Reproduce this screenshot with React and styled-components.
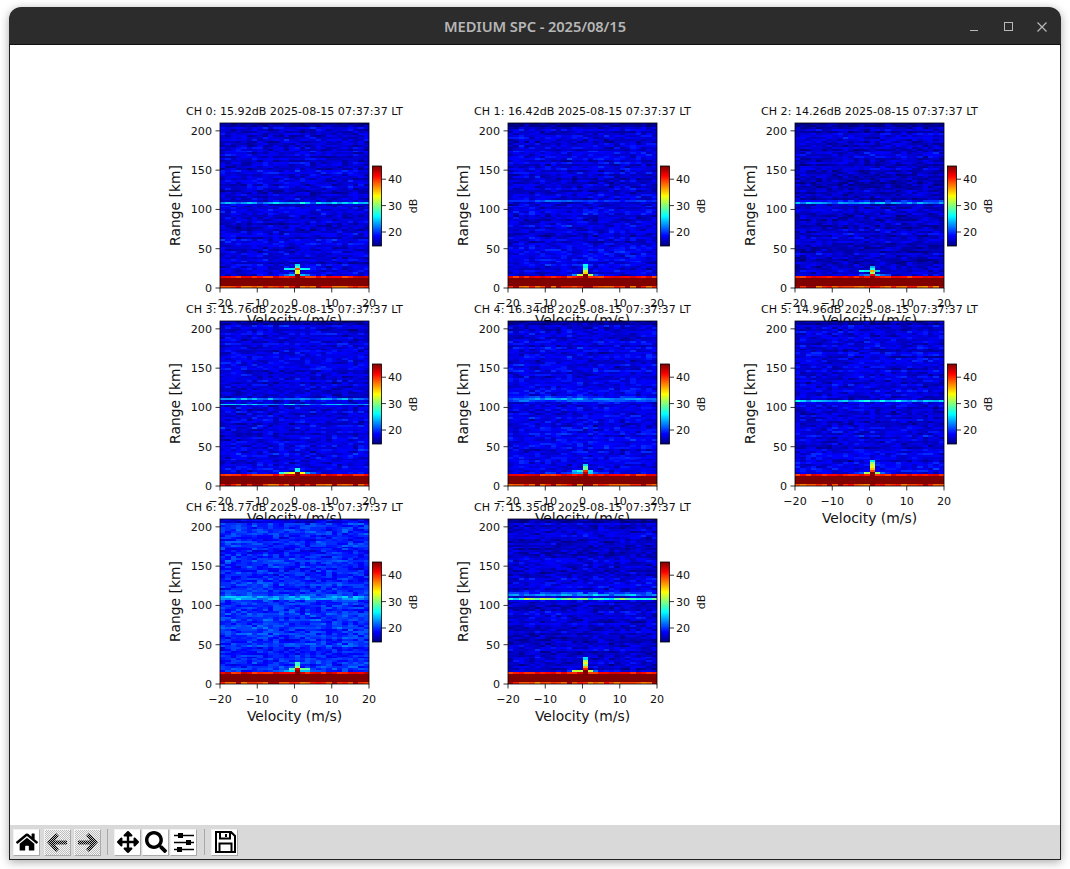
import { useId, useMemo } from 'react';
import styled, { createGlobalStyle } from 'styled-components';
import { FaHome, FaArrowsAlt, FaSearch } from 'react-icons/fa';

const GlobalStyle = createGlobalStyle`
  html, body { margin: 0; padding: 0; background: #fff; }
  body { width: 1070px; height: 869px; overflow: hidden; }
`;

const Window = styled.div`
  width: 1052px;
  height: 853px;
  margin: 7px 9px 9px;
  display: flex;
  flex-direction: column;
  box-sizing: border-box;
  background: #fff;
  border-radius: 12px 12px 0 0;
  box-shadow: 0 2px 10px rgba(0, 0, 0, 0.35);
  overflow: hidden;
`;

const TitleBar = styled.header`
  height: 38px;
  flex: none;
  position: relative;
  display: flex;
  align-items: center;
  justify-content: center;
  background: #2c2c2c;
  border-bottom: 1px solid #111;
  box-sizing: border-box;
`;

const Title = styled.h1`
  margin: 0;
  font: 600 14.7px "Noto Sans", sans-serif;
  letter-spacing: -0.1px;
  color: #b6b6b6;
`;

const WindowControls = styled.div`
  position: absolute;
  right: 2px;
  top: 0;
  height: 38px;
  display: flex;
`;

const WindowButton = styled.svg`
  width: 34px;
  height: 38px;
  fill: none;
  stroke: #b8b8b8;
  stroke-width: 1;
`;

const Body = styled.div`
  flex: 1;
  display: flex;
  flex-direction: column;
  min-height: 0;
  border-left: 1px solid #222;
  border-right: 1px solid #222;
  border-bottom: 1px solid #222;
`;

const Figure = styled.main`
  flex: 1;
  display: grid;
  grid-template-columns: 288px 287px 288px;
  grid-auto-rows: 198px;
  align-content: start;
  padding: 54px 0 0 150px;
`;

const ChartSvg = styled.svg`
  display: block;
  width: 288px;
  height: 198px;
  overflow: visible;
  font-family: "DejaVu Sans", sans-serif;
  fill: #000;
`;

const TickText = styled.text`
  font-size: 11.1px;
  fill: #111;
`;

const AxisLabel = styled.text`
  font-size: 13.9px;
  text-anchor: middle;
  fill: #111;
`;

const ChartTitle = styled.text`
  font-size: 11.1px;
  fill: #111;
`;

const CellPath = styled.path`
  shape-rendering: crispEdges;
`;

const Toolbar = styled.footer`
  height: 34px;
  flex: none;
  display: flex;
  align-items: center;
  padding-left: 3px;
  background: #d9d9d9;
`;

const ToolButton = styled.button`
  width: 27px;
  height: 27px;
  margin-right: ${(p) => p.$gap ?? 1}px;
  padding: 0;
  display: flex;
  align-items: center;
  justify-content: center;
  box-sizing: border-box;
  border: 1px solid;
  border-color: #f2f2f2 #aaa #aaa #f2f2f2;
  background: ${(p) => (p.$disabled
    ? 'repeating-conic-gradient(#bdbdbd 0 25%, #f4f4f4 0 50%) 0 0 / 2px 2px'
    : '#fff')};
  color: #000;
  svg { font-size: ${(p) => p.$size ?? 22}px; }
`;

const Separator = styled.span`
  width: 1px;
  height: 26px;
  margin: 0 6px;
  background: #a9a9a9;
`;

const DitherIcon = styled.svg`
  width: 25px;
  height: 25px;
  flex: none;
`;

const DrawnIcon = styled.svg`
  width: 24px;
  height: 24px;
  flex: none;
`;

const PLOT = { x: 60, y: 24, w: 149, h: 165 };
const COLS = 28;
const ROWS = 84;
const RANGE_TOP = 210;
const DB_MIN = 14.7;
const DB_MAX = 45;

const CHANNELS = [
  { id: 0, snr: '15.92', base: 17.4, lines: [[108, 6, 1.3]], peak: 30, spur: [23, 3, 5], seed: 11 },
  { id: 1, snr: '16.42', base: 17.5, lines: [[111, 3, 1.3]], peak: 30, spur: [16, 2, 3], seed: 23 },
  { id: 2, snr: '14.26', base: 16.9, lines: [[108, 5, 1.3], [112, 2, 1.3]], peak: 27, spur: [21, 3, 3], seed: 37 },
  { id: 3, snr: '15.76', base: 17.6, lines: [[104, 5.5, 1.3], [111, 5, 1.3]], peak: 23, spur: [16, 4, 3], seed: 41 },
  { id: 4, snr: '16.34', base: 17.8, lines: [[111, 5, 1.3], [114, 2, 1.3], [108, 2, 1.3]], peak: 28, spur: [18, 3, 3], seed: 53 },
  { id: 5, snr: '14.96', base: 17.5, lines: [[109, 6, 1.3]], peak: 33, spur: [16, 2, 3], seed: 67 },
  { id: 6, snr: '18.77', base: 19.6, lines: [[110, 3.5, 3]], peak: 28, spur: [18, 1, 5], seed: 71 },
  { id: 7, snr: '15.35', base: 17.2, lines: [[108, 11, 1.3], [113, 5, 1.3], [116, 2.5, 1.3]], peak: 35, spur: [17, 3, 3], seed: 83 },
];

const random = (seed) => () => {
  seed = (seed + 0x6d2b79f5) | 0;
  let t = Math.imul(seed ^ (seed >>> 15), 1 | seed);
  t = (t + Math.imul(t ^ (t >>> 7), 61 | t)) ^ t;
  return ((t ^ (t >>> 14)) >>> 0) / 4294967296;
};

const clamp = (v) => Math.max(0, Math.min(1, v));

function jet(v) {
  const part = (c) => Math.round(255 * clamp(1.5 - Math.abs(4 * v - c)));
  return `rgb(${part(3)},${part(2)},${part(1)})`;
}

// spectrum cell in dB, for one range row and one velocity bin
function cellValue(ch, km, vel, rowShift, rnd) {
  const near = Math.abs(vel - 0.6);
  if (km < 2.5) return rnd() < 0.85 ? 37 + rnd() * 4 : 44;
  if (km < 13) return 45.5;
  if (km < 15.2) return near < 1 ? 45.5 : 39 + rnd() * 4;

  let db = ch.base + rowShift + (rnd() + rnd() - 1) * 2.2;
  if (km > 205) db -= 2;
  for (const [center, strength, width] of ch.lines) {
    const d = Math.abs(km - center) / width;
    if (d < 1) db += strength * (0.7 + rnd() * 0.6);
  }
  if (near < 1.1 && km < ch.peak) db += 6 + (ch.peak - km) * (0.8 + rnd() * 0.4);
  const [spurKm, spurLeft, spurRight] = ch.spur;
  if (Math.abs(km - spurKm) < 1.3 && vel > -spurLeft && vel < spurRight) db += 8;
  if (km < 17 && near < 6) db += 8 * (1 - near / 6);
  return db;
}

function buildSpectrum(ch) {
  const rnd = random(ch.seed);
  const buckets = new Map();
  const cw = PLOT.w / COLS;
  const rh = PLOT.h / ROWS;
  for (let r = 0; r < ROWS; r++) {
    const km = ((ROWS - r - 0.5) / ROWS) * RANGE_TOP;
    const rowShift = (rnd() - 0.5) * 1.6;
    for (let c = 0; c < COLS; c++) {
      const vel = ((c + 0.5) / COLS) * 40 - 20;
      const db = cellValue(ch, km, vel, rowShift, rnd);
      const level = Math.round(clamp((db - DB_MIN) / (DB_MAX - DB_MIN)) * 48) / 48;
      const color = jet(level);
      const x = (c * cw).toFixed(2);
      const y = (r * rh).toFixed(2);
      const cell = `M${x} ${y}h${cw.toFixed(2)}v${rh.toFixed(2)}h-${cw.toFixed(2)}z`;
      buckets.set(color, (buckets.get(color) ?? '') + cell);
    }
  }
  return [...buckets.entries()];
}

const minus = (n) => (n < 0 ? `\u2212${-n}` : `${n}`);

function Colorbar({ gradientId }) {
  const x = PLOT.x + 152.5;
  const y = PLOT.y + 43;
  const h = 80;
  const yOf = (db) => y + h - ((db - DB_MIN) / (DB_MAX - DB_MIN)) * h;
  return (
    <g>
      <rect x={x} y={y} width={9} height={h} fill={`url(#${gradientId})`} stroke="#000" strokeWidth="0.8" />
      {[20, 30, 40].map((db) => (
        <g key={db}>
          <line x1={x + 9} x2={x + 13.5} y1={yOf(db)} y2={yOf(db)} stroke="#000" strokeWidth="0.8" />
          <TickText x={x + 15.5} y={yOf(db) + 4}>{db}</TickText>
        </g>
      ))}
      <TickText transform={`translate(${x + 44} ${y + 40}) rotate(-90)`} textAnchor="middle">dB</TickText>
    </g>
  );
}

function SpectrumChart({ ch }) {
  const gradientId = useId();
  const cells = useMemo(() => buildSpectrum(ch), [ch]);
  const { x, y, w, h } = PLOT;
  const stops = Array.from({ length: 17 }, (_, i) => i / 16);
  return (
    <ChartSvg viewBox="0 0 288 198">
      <defs>
        <linearGradient id={gradientId} x1="0" y1="1" x2="0" y2="0">
          {stops.map((s) => <stop key={s} offset={s} stopColor={jet(s)} />)}
        </linearGradient>
      </defs>
      <ChartTitle x={x - 34} y={y - 8}>
        {`CH ${ch.id}: ${ch.snr}dB 2025-08-15 07:37:37 LT`}
      </ChartTitle>
      <g transform={`translate(${x} ${y})`}>
        {cells.map(([color, d]) => <CellPath key={color} d={d} fill={color} />)}
      </g>
      <rect x={x} y={y} width={w} height={h} fill="none" stroke="#000" strokeWidth="0.8" />
      {[-20, -10, 0, 10, 20].map((v) => {
        const tx = x + ((v + 20) / 40) * w;
        return (
          <g key={v}>
            <line x1={tx} x2={tx} y1={y + h} y2={y + h + 4.5} stroke="#000" strokeWidth="0.8" />
            <TickText x={tx} y={y + h + 19} textAnchor="middle">{minus(v)}</TickText>
          </g>
        );
      })}
      {[0, 50, 100, 150, 200].map((km) => {
        const ty = y + h - (km / RANGE_TOP) * h;
        return (
          <g key={km}>
            <line x1={x - 4.5} x2={x} y1={ty} y2={ty} stroke="#000" strokeWidth="0.8" />
            <TickText x={x - 8} y={ty + 4} textAnchor="end">{km}</TickText>
          </g>
        );
      })}
      <AxisLabel x={x + w / 2} y={y + h + 36.5}>Velocity (m/s)</AxisLabel>
      <AxisLabel transform={`translate(${x - 40} ${y + h / 2}) rotate(-90)`}>Range [km]</AxisLabel>
      <Colorbar gradientId={gradientId} />
    </ChartSvg>
  );
}

function DitherArrow({ flip }) {
  const patternId = useId();
  return (
    <DitherIcon viewBox="0 0 25 25">
      <defs>
        <pattern id={patternId} width="2" height="2" patternUnits="userSpaceOnUse">
          <rect width="2" height="2" fill="#bbb" />
          <rect width="1" height="1" fill="#000" />
          <rect x="1" y="1" width="1" height="1" fill="#000" />
        </pattern>
      </defs>
      <path
        d="M11 3l3 3-4 4.500h12v4H10l4 4.500-3 3-9-10z"
        transform={flip ? 'matrix(-1 0 0 1 25 0)' : undefined}
        fill={`url(#${patternId})`}
      />
    </DitherIcon>
  );
}

function SlidersIcon() {
  return (
    <DrawnIcon viewBox="0 0 24 24">
      <path d="M2 5.500h20M2 12.500h20M2 19.500h20" stroke="#000" strokeWidth="1.300" />
      <path d="M6 3h5v5H6zM14 10h5v5h-5zM5 17h5v5H5z" fill="#000" />
    </DrawnIcon>
  );
}

function SaveIcon() {
  return (
    <DrawnIcon viewBox="0 0 24 24">
      <path
        d="M3 2h15l4 4v16H3zM7 2.500v6h10v-6M13 4v3M6.500 22v-8.500h12V22"
        fill="none"
        stroke="#000"
        strokeWidth="2"
      />
    </DrawnIcon>
  );
}

export default function App() {
  return (
    <>
      <GlobalStyle />
      <Window>
        <TitleBar>
          <Title>MEDIUM SPC - 2025/08/15</Title>
          <WindowControls>
            <WindowButton viewBox="0 0 34 38"><path d="M13 23.500h8" /></WindowButton>
            <WindowButton viewBox="0 0 34 38"><rect x="13.500" y="15.500" width="8" height="8" /></WindowButton>
            <WindowButton viewBox="0 0 34 38"><path d="M12.500 15.500l9 9M21.500 15.500l-9 9" strokeWidth="1.200" /></WindowButton>
          </WindowControls>
        </TitleBar>
        <Body>
          <Figure>
            {CHANNELS.map((ch) => <SpectrumChart key={ch.id} ch={ch} />)}
          </Figure>
          <Toolbar>
            <ToolButton $gap={4}><FaHome /></ToolButton>
            <ToolButton $disabled $gap={3}><DitherArrow /></ToolButton>
            <ToolButton $disabled $gap={0}><DitherArrow flip /></ToolButton>
            <Separator />
            <ToolButton><FaArrowsAlt /></ToolButton>
            <ToolButton><FaSearch /></ToolButton>
            <ToolButton><SlidersIcon /></ToolButton>
            <Separator />
            <ToolButton><SaveIcon /></ToolButton>
          </Toolbar>
        </Body>
      </Window>
    </>
  );
}
